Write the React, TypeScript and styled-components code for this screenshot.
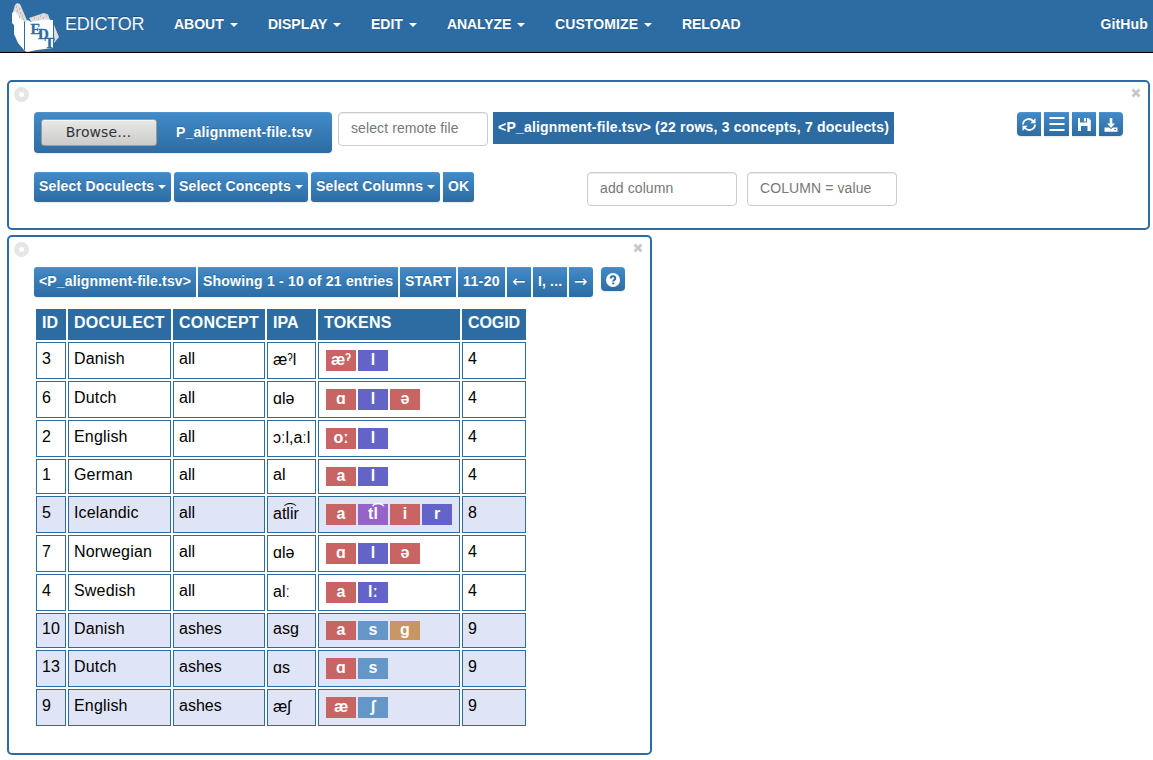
import React from "react";
import styled, { createGlobalStyle, css } from "styled-components";

const BLUE = "#2d6ca2";

const GlobalStyle = createGlobalStyle`
  *, *::before, *::after { box-sizing: border-box; }
  body {
    margin: 0;
    background: #fff;
    color: #000;
    font-family: "Liberation Sans", "DejaVu Sans", sans-serif;
    font-size: 14px;
    line-height: 20px;
  }
`;

const Text = styled.span<{ $sp?: number }>`
  letter-spacing: ${(p) => p.$sp ?? 0}px;
  white-space: pre;
`;

const Navbar = styled.nav`
  display: flex;
  height: 53px;
  padding: 0 5px 0 10px;
  background: ${BLUE};
  border-bottom: 1px solid #000;
  color: #fff;
  text-shadow: 0 -1px 0 rgba(0, 0, 0, 0.25);
`;

const Brand = styled.a`
  display: flex;
  width: 149px;
  color: #f4f8fb;
  font-size: 18px;
  line-height: 48px;
`;

const Logo = styled.svg`
  display: block;
  width: 50px;
  height: 52px;
  margin-right: 5px;
  text-shadow: none;
`;

const NavItem = styled.a<{ $w: number }>`
  display: flex;
  align-items: center;
  height: 48px;
  width: ${(p) => p.$w}px;
  padding-left: 15px;
  font-weight: bold;
`;

const NavEnd = styled.a`
  margin-left: auto;
  font-weight: bold;
  line-height: 48px;
`;

const Caret = styled.i<{ $gap: number }>`
  width: 0;
  height: 0;
  margin-left: ${(p) => p.$gap}px;
  margin-top: 2px;
  border: 4px solid transparent;
  border-top-color: #fff;
  border-bottom: 0;
`;

const Page = styled.main`
  display: flex;
  flex-direction: column;
  gap: 5px;
  padding: 27px 3px 0 7px;
`;

const Panel = styled.section<{ $w: number; $h: number }>`
  width: ${(p) => p.$w}px;
  height: ${(p) => p.$h}px;
  border: 2px solid ${BLUE};
  border-radius: 5px;
  padding: 5px 7px 0 5px;
`;

const PanelTop = styled.header`
  display: flex;
  justify-content: space-between;
  height: 25px;
`;

const Ring = styled.i`
  width: 15px;
  height: 15px;
  border: 5px solid #e6e6e6;
  border-radius: 50%;
`;

const Close = styled.svg`
  width: 10px;
  height: 10px;
  margin-top: 1px;
`;

const PanelBody = styled.div`
  padding: 0 18px 0 20px;
`;

const Row = styled.div<{ $h: number }>`
  display: flex;
  align-items: flex-start;
  height: ${(p) => p.$h}px;
`;

const raised = css`
  background: linear-gradient(#428bca, ${BLUE});
  box-shadow: inset 0 1px 0 rgba(255, 255, 255, 0.08), 0 1px 2px rgba(0, 0, 0, 0.1);
  color: #fff;
  font: bold 14px/20px "Liberation Sans", sans-serif;
  text-shadow: 0 -1px 0 rgba(0, 0, 0, 0.2);
  border: 0;
`;

const FilePicker = styled.div`
  ${raised}
  display: flex;
  align-items: center;
  width: 298px;
  height: 41px;
  padding-left: 7px;
  margin-right: 6px;
  border-radius: 4px;
`;

const FileName = styled(Text)`
  padding-bottom: 2px;
`;

const Browse = styled.button`
  width: 116px;
  height: 27px;
  margin-right: 19px;
  padding: 0 1px 1px 0;
  border: 1px solid #9a9c96;
  border-radius: 3px;
  background: linear-gradient(#e8e8e7, #cbcbca);
  box-shadow: inset 0 1px 0 #f5f5f4;
  color: #2e3436;
  font: 14px "DejaVu Sans", sans-serif;
  letter-spacing: 0.1px;
`;

const Field = styled.input<{ $ml?: number }>`
  width: 150px;
  height: 34px;
  margin-left: ${(p) => p.$ml ?? 0}px;
  padding: 5px 12px 7px;
  border: 1px solid #ccc;
  border-radius: 4px;
  box-shadow: inset 0 1px 1px rgba(0, 0, 0, 0.075);
  font: 14px "Liberation Sans", sans-serif;
  letter-spacing: 0.1px;
  &::placeholder { color: #777; opacity: 1; }
`;

const Status = styled.div`
  width: 401px;
  height: 32px;
  margin-left: 5px;
  padding-left: 5px;
  background: ${BLUE};
  color: #fff;
  font-weight: bold;
  line-height: 31px;
`;

const Button = styled.button<{ $w: number; $ml?: number; $r?: string }>`
  ${raised}
  display: flex;
  align-items: center;
  width: ${(p) => p.$w}px;
  height: 30px;
  margin-left: ${(p) => p.$ml ?? 0}px;
  padding: 0 0 2px 5px;
  border-radius: ${(p) => p.$r ?? "3px"};
`;

const Arrow = styled.span`
  font: 16px/20px "DejaVu Sans", sans-serif;
  margin-top: 2px;
`;

const IconButton = styled.button<{ $w?: number; $ml?: number; $r?: string }>`
  ${raised}
  display: flex;
  align-items: center;
  justify-content: center;
  width: ${(p) => p.$w ?? 24}px;
  height: 24px;
  margin-left: ${(p) => p.$ml ?? 0}px;
  padding: 0;
  border-radius: ${(p) => p.$r ?? "0"};
`;

const IconGroup = styled.div`
  display: flex;
  gap: 3px;
  margin-left: auto;
`;

const Glyph = styled.svg`
  display: block;
  width: 16px;
  height: 16px;
`;

const Table = styled.table`
  border-collapse: separate;
  border-spacing: 2px;
  table-layout: fixed;
  width: 494px;
  font-size: 16px;
  line-height: 20px;
`;

const Th = styled.th<{ $w: number }>`
  width: ${(p) => p.$w}px;
  height: 31px;
  padding: 0 0 3px 6px;
  background: ${BLUE};
  color: #fff;
  text-align: left;
  white-space: nowrap;
`;

const Tr = styled.tr<{ $h: number; $shaded: boolean }>`
  height: ${(p) => p.$h}px;
  background: ${(p) => (p.$shaded ? "#e0e4f7" : "#fff")};
`;

const Td = styled.td<{ $top?: number }>`
  border: 1px solid ${BLUE};
  padding: ${(p) => p.$top ?? 6}px 0 0 5px;
  vertical-align: top;
  white-space: nowrap;
`;

const Tokens = styled.div`
  display: flex;
  gap: 2px;
  padding-left: 2px;
`;

const Token = styled.span<{ $c: string; $h: number }>`
  width: 30px;
  height: ${(p) => p.$h}px;
  background: ${(p) => p.$c};
  color: #fff;
  font-weight: bold;
  line-height: ${(p) => p.$h - 2}px;
  text-align: center;
`;

const toneColors: Record<string, string> = {
  v: "#c86464",
  l: "#6464c8",
  t: "#9664c8",
  s: "#6496c8",
  g: "#c89664",
};

type Entry = {
  id: string;
  doculect: string;
  concept: string;
  ipa: string;
  tokens: [string, string][];
  cogid: string;
  short?: boolean;
  shaded?: boolean;
};

const entries: Entry[] = [
  { id: "3", doculect: "Danish", concept: "all", ipa: "æˀl", tokens: [["æˀ", "v"], ["l", "l"]], cogid: "4" },
  { id: "6", doculect: "Dutch", concept: "all", ipa: "ɑlə", tokens: [["ɑ", "v"], ["l", "l"], ["ə", "v"]], cogid: "4" },
  { id: "2", doculect: "English", concept: "all", ipa: "ɔːl,aːl", tokens: [["oː", "v"], ["l", "l"]], cogid: "4" },
  { id: "1", doculect: "German", concept: "all", ipa: "al", tokens: [["a", "v"], ["l", "l"]], cogid: "4", short: true },
  { id: "5", doculect: "Icelandic", concept: "all", ipa: "atl͡ir", tokens: [["a", "v"], ["tl͡", "t"], ["i", "v"], ["r", "l"]], cogid: "8", shaded: true },
  { id: "7", doculect: "Norwegian", concept: "all", ipa: "ɑlə", tokens: [["ɑ", "v"], ["l", "l"], ["ə", "v"]], cogid: "4" },
  { id: "4", doculect: "Swedish", concept: "all", ipa: "alː", tokens: [["a", "v"], ["lː", "l"]], cogid: "4" },
  { id: "10", doculect: "Danish", concept: "ashes", ipa: "asg", tokens: [["a", "v"], ["s", "s"], ["g", "g"]], cogid: "9", short: true, shaded: true },
  { id: "13", doculect: "Dutch", concept: "ashes", ipa: "ɑs", tokens: [["ɑ", "v"], ["s", "s"]], cogid: "9", shaded: true },
  { id: "9", doculect: "English", concept: "ashes", ipa: "æʃ", tokens: [["æ", "v"], ["ʃ", "s"]], cogid: "9", shaded: true },
];

/* label, column width, tracking */
const columns: [string, number, number][] = [
  ["ID", 30, 0],
  ["DOCULECT", 103, 0.25],
  ["CONCEPT", 92, 0.25],
  ["IPA", 49, 0],
  ["TOKENS", 142, 0.2],
  ["COGID", 64, -0.1],
];

/* label, item width, caret gap, tracking */
const menu: [string, number, number, number][] = [
  ["ABOUT", 94, 6.2, 0],
  ["DISPLAY", 103, 5.5, 0],
  ["EDIT", 76, 6, 0],
  ["ANALYZE", 108, 6, -0.1],
  ["CUSTOMIZE", 127, 6, 0.1],
];

const BookLogo = () => (
  <Logo viewBox="0 0 50 52">
    <path d="M3 12 L5 5 L7 3 L10 4 L16 18 L18 23 L12 22 Z" fill="#dedbda" />
    <path d="M19 18 L34 13 L38 14.5 L40 20 L22 23 Z" fill="#dedbda" />
    <path d="M44 25 L49 37 L44 43 Z" fill="#dedbda" />
    <path d="M2 13 L5 11 L10 18 L14 21 L17 24 V51 L14 50 L8 43 L4 34 V25 L2 23 Z" fill="#fff" />
    <path d="M14 23 L18 20 L21 22 L34 19.5 L43 20 V48 L35 49 L27 50 L17 52 L14 50 Z" fill="#fff" />
    <path d="M14.5 21.5 V50" stroke={BLUE} strokeWidth="1" />
    <g fill={BLUE} stroke={BLUE} strokeWidth=".3" fontFamily="Liberation Serif, serif" fontWeight="bold" fontSize="15">
      <text x="20.5 28 34.5" y="34 38.5 47.5">EDT</text>
    </g>
    <path d="M6 7h1M9 9h1M7 11h1M10 13h1M9 17h1M12 16h1M13 19h1M24 18h1M28 19h1M30 16h1M33 18h1M36 16h1" stroke="#9a9a9a" />
  </Logo>
);

const CloseMark = () => (
  <Close viewBox="0 0 10 10">
    <path d="M1.5 1.5 L8.5 8.5 M8.5 1.5 L1.5 8.5" stroke="#c8c8c8" strokeWidth="2.8" />
  </Close>
);

const RefreshIcon = () => (
  <Glyph viewBox="0 0 16 16">
    <path d="M2 8.5 C2 4 8 1 12 4.8 M14 8.5 C14 13 8 16 4 12.2" fill="none" stroke="#fff" strokeWidth="1.8" />
    <path d="M14.5 2 V7.2 H9.3 Z M1.5 15 V9.8 H6.7 Z" fill="#fff" />
  </Glyph>
);

const ListIcon = () => (
  <Glyph viewBox="0 0 16 16">
    <path d="M.5 2h15M.5 8h15M.5 14h15" stroke="#fff" strokeWidth="2" />
  </Glyph>
);

const SaveIcon = () => (
  <Glyph viewBox="0 0 16 16">
    <path d="M2 2 H4 V6.5 H11 V2 H12.5 L14.8 4.3 V15 H11.5 V10 H5 V15 H2 Z M8 2 H10 V5.5 H8 Z" fill="#fff" />
  </Glyph>
);

const DownloadIcon = () => (
  <Glyph viewBox="0 0 16 16">
    <path d="M6.7 2 H9.3 V7.5 H12 L8 12 L4 7.5 H6.7 Z" fill="#fff" />
    <path d="M1.5 11.5 H6 L8 13 L10 11.5 H14.5 V15.8 H1.5 Z M11.5 13 V14 H13 V13 Z" fill="#fff" fillRule="evenodd" />
  </Glyph>
);

const HelpIcon = () => (
  <Glyph viewBox="0 0 16 16">
    <circle cx="8" cy="9" r="7" fill="#fff" />
    <path d="M5.7 7.6 C5.7 4.4 10.5 4.5 10.3 7.4 C10.2 9 8.2 8.8 8.2 10.6" fill="none" stroke={BLUE} strokeWidth="1.9" />
    <path d="M7.2 11.5h2v1.8h-2z" fill={BLUE} />
  </Glyph>
);

export default function App() {
  return (
    <>
      <GlobalStyle />
      <Navbar>
        <Brand>
          <BookLogo />
          <Text $sp={-0.2}>EDICTOR</Text>
        </Brand>
        {menu.map(([label, width, gap, sp]) => (
          <NavItem key={label} $w={width}>
            <Text $sp={sp}>{label}</Text>
            <Caret $gap={gap} />
          </NavItem>
        ))}
        <NavItem $w={90}>
          <Text $sp={-0.1}>RELOAD</Text>
        </NavItem>
        <NavEnd>
          <Text $sp={0.15}>GitHub</Text>
        </NavEnd>
      </Navbar>
      <Page>
        <Panel $w={1143} $h={150}>
          <PanelTop>
            <Ring />
            <CloseMark />
          </PanelTop>
          <PanelBody>
            <Row $h={60}>
              <FilePicker>
                <Browse>Browse…</Browse>
                <FileName $sp={0.2}>P_alignment-file.tsv</FileName>
              </FilePicker>
              <Field placeholder="select remote file" />
              <Status>
                <Text $sp={0.2}>{"<P_alignment-file.tsv> (22 rows, 3 concepts, 7 doculects)"}</Text>
              </Status>
              <IconGroup>
                <IconButton $r="4px 0 0 4px"><RefreshIcon /></IconButton>
                <IconButton $w={25}><ListIcon /></IconButton>
                <IconButton><SaveIcon /></IconButton>
                <IconButton $r="0 4px 4px 0"><DownloadIcon /></IconButton>
              </IconGroup>
            </Row>
            <Row $h={34}>
              <Button $w={137}><Text $sp={0.2}>Select Doculects</Text><Caret $gap={4} /></Button>
              <Button $w={134} $ml={3}><Text $sp={0.2}>Select Concepts</Text><Caret $gap={4} /></Button>
              <Button $w={129} $ml={3}><Text $sp={0.15}>Select Columns</Text><Caret $gap={4} /></Button>
              <Button $w={31} $ml={3} $r="0 3px 3px 0"><Text>OK</Text></Button>
              <Field $ml={113} placeholder="add column" />
              <Field $ml={10} placeholder="COLUMN = value" />
            </Row>
          </PanelBody>
        </Panel>
        <Panel $w={645} $h={520}>
          <PanelTop>
            <Ring />
            <CloseMark />
          </PanelTop>
          <PanelBody>
            <Row $h={40}>
              <Button $w={162} $r="3px 0 0 3px"><Text $sp={0.16}>{"<P_alignment-file.tsv>"}</Text></Button>
              <Button $w={200} $ml={2} $r="0"><Text $sp={0.21}>Showing 1 - 10 of 21 entries</Text></Button>
              <Button $w={56} $ml={2} $r="0"><Text $sp={0.15}>START</Text></Button>
              <Button $w={47} $ml={2} $r="0"><Text $sp={0.4}>11-20</Text></Button>
              <Button $w={24} $ml={2} $r="0"><Arrow>←</Arrow></Button>
              <Button $w={34} $ml={2} $r="0"><Text $sp={0.15}>I, ...</Text></Button>
              <Button $w={24} $ml={2} $r="0 3px 3px 0"><Arrow>→</Arrow></Button>
              <IconButton $ml={8} $r="4px"><HelpIcon /></IconButton>
            </Row>
            <Table>
              <thead>
                <tr>
                  {columns.map(([label, width, sp]) => (
                    <Th key={label} $w={width}><Text $sp={sp}>{label}</Text></Th>
                  ))}
                </tr>
              </thead>
              <tbody>
                {entries.map((e) => {
                  const top = e.short ? 5 : 6;
                  return (
                    <Tr key={e.id} $h={e.short ? 35 : 37} $shaded={!!e.shaded}>
                      <Td $top={top}><Text>{e.id}</Text></Td>
                      <Td $top={top}><Text $sp={0.17}>{e.doculect}</Text></Td>
                      <Td $top={top}><Text>{e.concept}</Text></Td>
                      <Td $top={e.short ? 5 : 7}><Text>{e.ipa}</Text></Td>
                      <Td $top={7}>
                        <Tokens>
                          {e.tokens.map(([sound, tone], i) => (
                            <Token key={i} $c={toneColors[tone]} $h={e.short ? 19 : 21}>{sound}</Token>
                          ))}
                        </Tokens>
                      </Td>
                      <Td $top={top}><Text>{e.cogid}</Text></Td>
                    </Tr>
                  );
                })}
              </tbody>
            </Table>
          </PanelBody>
        </Panel>
      </Page>
    </>
  );
}
